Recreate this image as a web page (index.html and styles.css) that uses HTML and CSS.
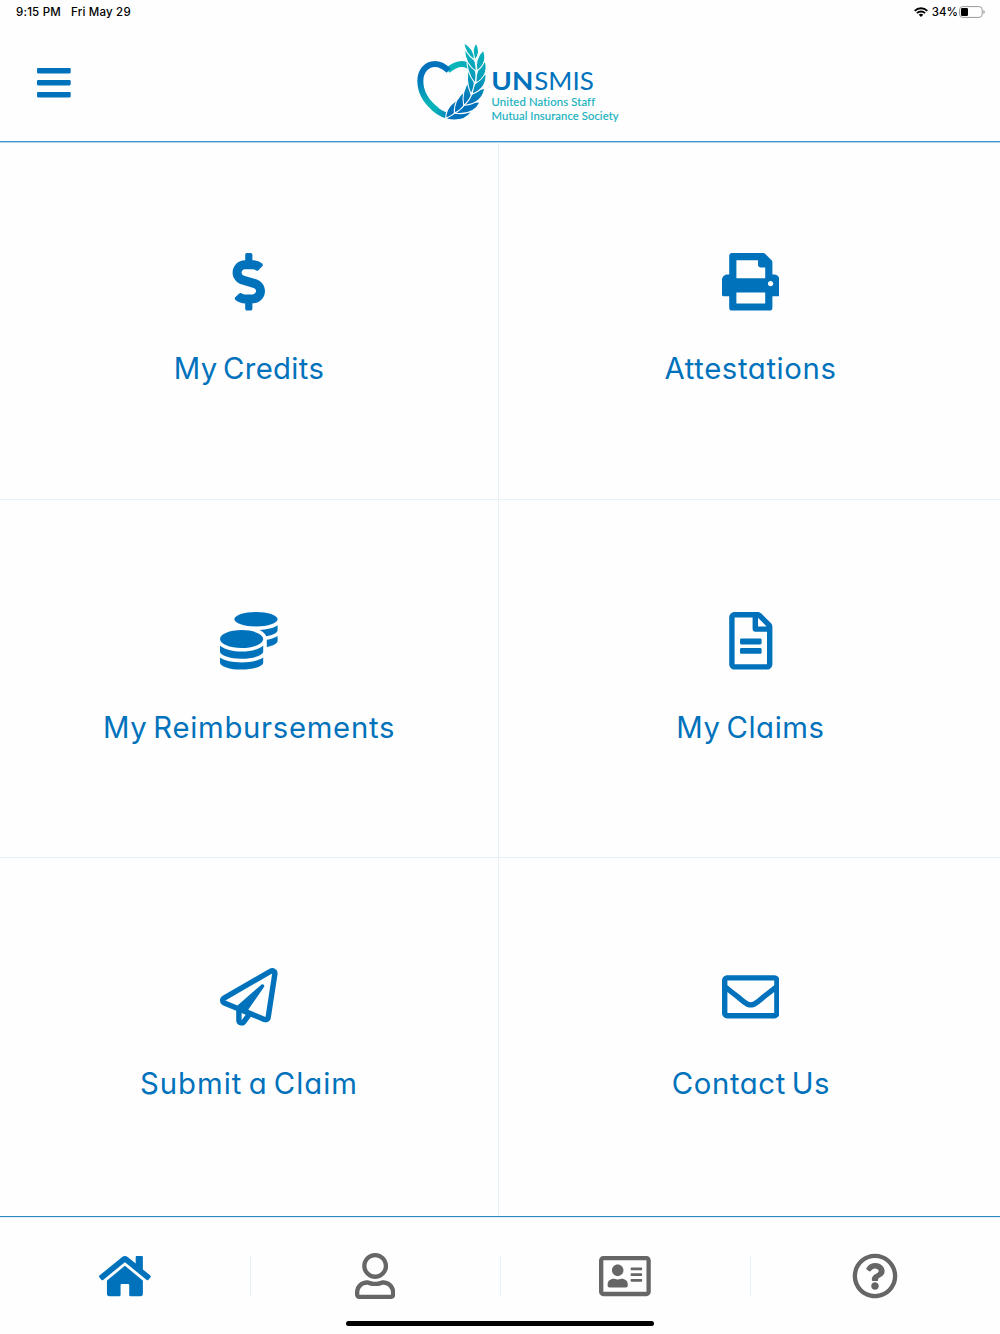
FILE: index.html
```html
<!DOCTYPE html>
<html lang="en">
<head>
<meta charset="utf-8">
<title>UNSMIS</title>
<link rel="stylesheet" href="styles.css">
</head>
<body>
<header class="header">
  <div class="status">
    <span class="time">9:15 PM</span><span class="date">Fri May 29</span>
    <span class="status-right">
      <svg class="wifi" viewBox="0 0 14 10"><g fill="none" stroke="#000" stroke-width="1.8"><path d="M.7 3.8a9 9 0 0 1 12.6 0"/><path d="M2.9 6.2a5.8 5.8 0 0 1 8.2 0"/></g><path d="M4.7 7.8a3.3 3.3 0 0 1 4.600 0L7 10z"/></svg>
      <span class="percent">34%</span>
      <svg class="battery" viewBox="0 0 26 12"><rect x=".6" y=".6" width="22.6" height="10.8" rx="3" fill="none" stroke="#999"/><rect x="2" y="2" width="7" height="8" rx="1.3"/><path d="M24.4 4v4q1.4-.7 1.4-2t-1.4-2z" fill="#999"/></svg>
    </span>
  </div>
  <div class="brand-bar">
    <svg class="menu" viewBox="0 60 448 392"><path d="M16 132h416c9 0 16-7 16-16V76c0-9-7-16-16-16H16C7 60 0 67 0 76v40c0 9 7 16 16 16zm0 160h416c9 0 16-7 16-16v-40c0-9-7-16-16-16H16c-9 0-16 7-16 16v40c0 9 7 16 16 16zm0 160h416c9 0 16-7 16-16v-40c0-9-7-16-16-16H16c-9 0-16 7-16 16v40c0 9 7 16 16 16z"/></svg>
    <svg class="logo" viewBox="412 38 212 90">
      <defs>
        <linearGradient id="left" gradientUnits="userSpaceOnUse" x1="40" y1="75" x2="60" y2="235"><stop offset=".25" stop-color="#0072bc"/><stop offset=".75" stop-color="#08b2b9"/></linearGradient>
        <linearGradient id="base" gradientUnits="userSpaceOnUse" x1="65" y1="0" x2="125" y2="0"><stop stop-color="#08b2b9"/><stop offset="1" stop-color="#0072bc"/></linearGradient>
        <linearGradient id="leaf" gradientUnits="userSpaceOnUse" x1="185" y1="20" x2="145" y2="235"><stop stop-color="#08b5b9"/><stop offset=".4" stop-color="#08a0bb"/><stop offset=".8" stop-color="#0072bc"/></linearGradient>
        <linearGradient id="lobe" gradientUnits="userSpaceOnUse" x1="105" y1="0" x2="185" y2="0"><stop offset=".4" stop-color="#08b5b9"/><stop offset="1" stop-color="#08a0bd"/></linearGradient>
      </defs>
      <g transform="translate(412 38) scale(.3333)">
        <g fill="none" stroke-width="18">
          <path d="M107 97C123 84 134 78 149 78c15 0 25 6 32 17" stroke="url(#lobe)"/>
          <path d="M64 209q26 24 56 27 14 0 25-6" stroke="url(#base)"/>
          <path d="M110 98C95 84 83 78 69 78 42 78 25 101 25 129c0 38 21 66 50 88" stroke="url(#left)"/>
        </g>
        <g fill="url(#leaf)" stroke="#fefefe" stroke-width="3.2">
          <path d="M103 243q26-36 75-21-22 32-75 21z"/>
          <path d="M101 241q1-39 42-59 6 41-42 59z"/>
          <path d="M130 226q22-39 74-33-18 39-74 33z"/>
          <path d="M127 226q-2-43 34-68 12 45-34 68z"/>
          <path d="M158 202q13-42 60-51-7 45-60 51z"/>
          <path d="M155 203q-9-45 21-79 18 45-21 79z"/>
          <path d="M181 168q1-42 41-61 3 44-41 61z"/>
          <path d="M177 169q-19-45-5-84 28 38 5 84z"/>
          <path d="M192 135q-4-42 28-66 11 43-28 66z"/>
          <path d="M189 136q-29-37-23-80 35 34 23 80z"/>
          <path d="M195 99q-8-37 19-63 15 37-19 63z"/>
          <path d="M192 100q-34-25-34-65 38 22 34 65z"/>
          <path d="M189 66q-13-27 3-51 17 26-3 51z"/>
          <path d="M187 66q-28-20-32-52 34 17 32 52z"/>
        </g>
      </g>
      <text class="un" x="491.3" y="89.5" textLength="42" lengthAdjust="spacingAndGlyphs">UN</text>
      <text class="smis" x="534.3" y="89.5" textLength="59.5" lengthAdjust="spacingAndGlyphs">SMIS</text>
      <text class="tag" x="491.6" y="105.6" textLength="103.5">United Nations Staff</text>
      <text class="tag" x="491.6" y="119.6" textLength="127">Mutual Insurance Society</text>
    </svg>
  </div>
</header>
<main class="grid">
  <a class="tile"><svg class="icon" viewBox="-112 0 512 512"><path d="M209.2 233.4l-108-31.6C88.7 198.2 80 186.5 80 173.5c0-16.3 13.2-29.5 29.5-29.5h66.3c12.2 0 24.2 3.7 34.2 10.5 6.1 4.1 14.3 3.1 19.5-2l34.8-34c7.1-6.9 6.1-18.4-1.8-24.5C238 74.8 207.4 64.1 176 64V16c0-8.8-7.2-16-16-16h-32c-8.800 0-16 7.200-16 16v48h-2.500C45.800 64-5.400 118.700.500 183.600c4.200 46.100 39.400 83.600 83.800 96.600l102.500 30c12.500 3.700 21.200 15.300 21.200 28.300 0 16.300-13.200 29.500-29.500 29.500h-66.300C100 368 88 364.300 78 357.500c-6.100-4.100-14.300-3.100-19.500 2l-34.800 34c-7.100 6.900-6.100 18.400 1.800 24.500 24.500 19.200 55.100 29.900 86.500 30v48c0 8.800 7.200 16 16 16h32c8.800 0 16-7.200 16-16v-48.200c46.600-.9 90.300-28.600 105.700-72.700 21.500-61.600-14.600-124.800-72.500-141.700z"/></svg><span class="label credits">My Credits</span></a>
  <a class="tile"><svg class="icon" viewBox="0 0 512 512"><path fill-rule="evenodd" d="M464 192h-16V81.900a24 24 0 0 0-7-17L383 7a24 24 0 0 0-17-7H88C74.700 0 64 10.700 64 24v168H48c-26.500 0-48 21.500-48 48v132c0 6.600 5.400 12 12 12h52v104c0 13.300 10.700 24 24 24h336c13.300 0 24-10.700 24-24V384h52c6.600 0 12-5.400 12-12V240c0-26.500-21.500-48-48-48zm-80 256H128v-96h256v96zM384 224H128V64h192v40c0 13.200 10.800 24 24 24h40v96zm48 72c-13.300 0-24-10.700-24-24s10.700-24 24-24 24 10.700 24 24-10.700 24-24 24z"/></svg><span class="label attest">Attestations</span></a>
  <a class="tile"><svg class="icon" viewBox="0 0 512 512"><path d="M0 405.300V448c0 35.300 86 64 192 64s192-28.700 192-64v-42.700C342.700 434.400 267.200 448 192 448S41.300 434.400 0 405.300zM320 128c106 0 192-28.700 192-64S426 0 320 0 128 28.700 128 64s86 64 192 64zM0 300.400V352c0 35.300 86 64 192 64s192-28.700 192-64v-51.600c-41.300 34-116.900 51.600-192 51.600S41.300 334.400 0 300.400zm416 11c57.300-11.100 96-31.700 96-55.400v-42.700c-23.200 16.400-57.300 27.600-96 34.500v63.600zM192 160C86 160 0 195.800 0 240s86 80 192 80 192-35.800 192-80-86-80-192-80zm219.300 56.300c60-10.800 100.700-32 100.700-56.300v-42.700c-35.500 25.100-96.500 38.600-160.700 41.800 29.500 14.300 51.200 33.500 60 57.200z"/></svg><span class="label reimb">My Reimbursements</span></a>
  <a class="tile"><svg class="icon" viewBox="-64 0 512 512"><path d="M288 248v28c0 6.600-5.400 12-12 12H108c-6.600 0-12-5.400-12-12v-28c0-6.600 5.400-12 12-12h168c6.600 0 12 5.400 12 12zm-12 72H108c-6.600 0-12 5.400-12 12v28c0 6.600 5.400 12 12 12h168c6.600 0 12-5.400 12-12v-28c0-6.600-5.400-12-12-12zm108-188.100V464c0 26.500-21.500 48-48 48H48c-26.500 0-48-21.500-48-48V48C0 21.500 21.500 0 48 0h204.100C264.800 0 277 5.100 286 14.100L369.900 98c9 8.900 14.100 21.200 14.100 33.900zm-128-80V128h76.100L256 51.900zM336 464V176H232c-13.300 0-24-10.700-24-24V48H48v416h288z"/></svg><span class="label claims">My Claims</span></a>
  <a class="tile"><svg class="icon" viewBox="0 0 512 512"><path d="M440 6.500L24 246.400c-34.400 19.900-31.100 70.800 5.700 85.900L144 379.600V464c0 46.400 59.200 65.500 86.600 28.600l43.800-59.100 111.900 46.200c5.900 2.400 12.100 3.600 18.300 3.600 8.200 0 16.300-2.100 23.600-6.200 12.800-7.200 21.600-20 23.900-34.500l59.400-387.200c6.100-40.100-36.900-68.800-71.500-48.900zM192 464v-64.600l36.600 15.100L192 464zm212.600-28.700l-153.800-63.500L391 169.500c10.700-15.500-9.500-33.500-23.700-21.200L155.800 332.600 48 288 464 48l-59.400 387.300z"/></svg><span class="label submit">Submit a Claim</span></a>
  <a class="tile"><svg class="icon" viewBox="0 0 512 512"><path d="M464 64H48C21.500 64 0 85.500 0 112v288c0 26.500 21.500 48 48 48h416c26.500 0 48-21.500 48-48V112c0-26.500-21.500-48-48-48zm0 48v40.800c-22.400 18.300-58.200 46.700-134.600 106.500-16.800 13.200-50.200 45.100-73.400 44.700-23.200.4-56.600-31.500-73.400-44.700C106.200 199.500 70.400 171.100 48 152.800V112h416zM48 400V214.400c22.900 18.300 55.400 43.900 104.900 82.600 21.900 17.200 60.200 55.200 103.100 55 42.700.2 80.500-37.200 103.100-55 49.500-38.700 82-64.300 104.900-82.600V400H48z"/></svg><span class="label contact">Contact Us</span></a>
</main>
<nav class="tabs">
  <a class="tab active"><svg width="51.800" height="46" viewBox="0 0 576 512"><path d="M488 312.700V456c0 13.300-10.700 24-24 24H348c-6.600 0-12-5.400-12-12V356c0-6.600-5.400-12-12-12h-72c-6.600 0-12 5.400-12 12v112c0 6.600-5.400 12-12 12H112c-13.300 0-24-10.700-24-24V312.700c0-3.600 1.600-7 4.400-9.300l188-154.800c4.400-3.600 10.800-3.600 15.300 0l188 154.800c2.700 2.300 4.300 5.700 4.300 9.300zm83.600-60.900L488 182.900V44.400c0-6.600-5.400-12-12-12h-56c-6.600 0-12 5.400-12 12V117l-89.500-73.700c-17.700-14.600-43.300-14.600-61 0L4.400 251.800c-5.100 4.200-5.800 11.800-1.600 16.900l25.500 31c4.200 5.100 11.800 5.800 16.900 1.600l235.200-193.700c4.400-3.600 10.800-3.600 15.300 0l235.200 193.700c5.100 4.200 12.700 3.500 16.900-1.600l25.500-31c4.200-5.200 3.400-12.700-1.700-16.900z"/></svg></a>
  <a class="tab"><svg width="40.300" height="46" viewBox="0 0 448 512"><path d="M313.600 304c-28.700 0-42.500 16-89.600 16s-60.800-16-89.600-16C60.200 304 0 364.200 0 438.400V464c0 26.500 21.500 48 48 48h352c26.500 0 48-21.500 48-48v-25.600c0-74.200-60.200-134.400-134.400-134.400zM400 464H48v-25.600c0-47.600 38.800-86.400 86.400-86.400 14.600 0 38.300 16 89.600 16 51.700 0 74.900-16 89.600-16 47.600 0 86.400 38.800 86.400 86.400V464zM224 288c79.500 0 144-64.500 144-144S303.500 0 224 0 80 64.500 80 144s64.500 144 144 144zm0-240c52.900 0 96 43.100 96 96s-43.100 96-96 96-96-43.100-96-96 43.100-96 96-96z"/></svg></a>
  <a class="tab"><svg width="51.800" height="46" viewBox="0 0 576 512"><path d="M528 32H48C21.500 32 0 53.500 0 80v352c0 26.500 21.500 48 48 48h480c26.500 0 48-21.500 48-48V80c0-26.500-21.500-48-48-48zm0 400H48V80h480v352zM208 256c35.300 0 64-28.700 64-64s-28.700-64-64-64-64 28.700-64 64 28.700 64 64 64zm-89.600 128h179.200c12.400 0 22.400-8.600 22.400-19.200v-19.200c0-31.800-30.100-57.600-67.200-57.600-10.800 0-18.700 8-44.800 8-26.900 0-33.400-8-44.800-8-37.100 0-67.200 25.800-67.200 57.600v19.200c0 10.600 10 19.200 22.400 19.200zM360 320h112c4.400 0 8-3.600 8-8v-16c0-4.400-3.600-8-8-8H360c-4.400 0-8 3.600-8 8v16c0 4.400 3.600 8 8 8zm0-64h112c4.400 0 8-3.600 8-8v-16c0-4.400-3.600-8-8-8H360c-4.400 0-8 3.600-8 8v16c0 4.400 3.600 8 8 8zm0-64h112c4.400 0 8-3.600 8-8v-16c0-4.400-3.600-8-8-8H360c-4.400 0-8 3.600-8 8v16c0 4.400 3.600 8 8 8z"/></svg></a>
  <a class="tab"><svg width="46" height="46" viewBox="0 0 512 512"><path d="M256 8C119 8 8 119.100 8 256c0 137 111 248 248 248s248-111 248-248C504 119.100 393 8 256 8zm0 448c-110.500 0-200-89.400-200-200 0-110.500 89.500-200 200-200 110.500 0 200 89.500 200 200 0 110.500-89.400 200-200 200zm107.200-255.200c0 67-72.400 68.100-72.400 92.900V300c0 6.600-5.400 12-12 12h-45.600c-6.600 0-12-5.400-12-12v-8.700c0-35.700 27.100-50 47.600-61.500 17.500-9.800 28.300-16.500 28.300-29.600 0-17.200-22-28.700-39.800-28.700-23.200 0-33.900 11-48.900 30-4.100 5.100-11.500 6.100-16.700 2.100l-27.800-21.100c-5.100-3.900-6.300-11-2.700-16.300 23.600-34.700 53.700-54.200 100.600-54.200 49 0 101.400 38.300 101.400 88.800zM298 368c0 23.200-18.800 42-42 42s-42-18.800-42-42 18.800-42 42-42 42 18.800 42 42z"/></svg></a>
  <span class="home-indicator"></span>
</nav>
</body>
</html>
```
FILE: styles.css
```css
* { box-sizing: border-box; }
body {
  margin: 0;
  height: 1334px;
  display: flex;
  flex-direction: column;
  background: #fefefe;
  color: #0072bc;
  font-family: Inter, "Open Sans", sans-serif;
  overflow: hidden;
}
svg { display: block; fill: currentColor; }

.header {
  height: 142px;
  border-bottom: 1px solid #3f95d0;
  box-shadow: 0 1px 0 #a9d5ef;
}
.status {
  height: 24px;
  padding: 0 15px 0 16px;
  display: flex;
  align-items: center;
  color: #000;
  font-size: 11.5px;
  font-weight: 500;
  letter-spacing: .2px;
}
.date { margin-left: 10px; }
.status-right { margin-left: auto; display: flex; align-items: center; }
.wifi { width: 14px; height: 10px; margin-right: 4px; }
.percent { letter-spacing: 0; margin-right: 1px; }
.battery { width: 26px; height: 12px; }

.brand-bar { display: flex; padding: 14px 0 0 37px; }
.menu { width: 33.7px; height: 29.5px; margin-top: 30px; }
.logo { width: 212px; height: 90px; margin-left: 341.3px; }
.un, .smis { font-family: Lato, sans-serif; font-size: 25.5px; fill: #0072bc; }
.un { font-weight: 700; }
.tag {
  font-family: Lato, sans-serif;
  font-size: 11.3px;
  font-variant-ligatures: none;
  fill: #12b0bd;
  stroke: #12b0bd;
  stroke-width: .15px;
}

.grid {
  display: grid;
  grid-template-columns: 499px 501px;
  grid-template-rows: 358px 358px 358px;
}
.tile {
  display: flex;
  flex-direction: column;
  align-items: center;
  padding-top: 111px;
  border-bottom: 1px solid #e6f1f8;
}
.tile:nth-child(n+3) { padding-top: 112px; }
.tile:nth-child(n+5) { padding-top: 110px; border-bottom: 0; }
.tile:nth-child(odd) { border-right: 1px solid #e6f1f8; }
.tile:nth-child(even) { padding-left: 2px; }
.icon { width: 57.6px; height: 57.6px; }
.label {
  margin-top: 38.4px;
  font-size: 29.3px;
  line-height: 40px;
  white-space: nowrap;
  word-spacing: -3px;
  font-feature-settings: "cv11";
}
.credits { letter-spacing: .33px; }
.attest { letter-spacing: .62px; }
.reimb { letter-spacing: .7px; }
.claims { letter-spacing: .6px; }
.submit { letter-spacing: 1px; }
.contact { letter-spacing: .6px; margin-left: 1px; }

.tabs {
  position: relative;
  height: 118px;
  border-top: 1px solid #2c88c5;
  box-shadow: inset 0 1px 0 #dceffa;
  display: grid;
  grid-template-columns: repeat(4, 250px);
  padding-top: 39px;
  color: #666;
}
.tab {
  height: 40px;
  display: flex;
  align-items: center;
  justify-content: center;
}
.tab + .tab { border-left: 1px solid #e6f1f8; padding-right: 1px; }
.tab svg { flex: none; }
.active { color: #0072bc; }
.home-indicator {
  position: absolute;
  left: 346px;
  bottom: 8px;
  width: 308px;
  height: 5px;
  border-radius: 3px;
  background: #000;
}
```
